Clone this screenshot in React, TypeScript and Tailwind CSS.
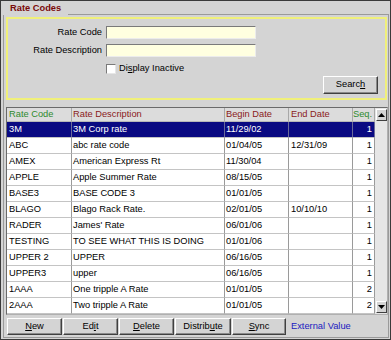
import React from "react";

const rows: string[][] = [
  ["3M", "3M Corp rate", "11/29/02", "", "1"],
  ["ABC", "abc rate code", "01/04/05", "12/31/09", "1"],
  ["AMEX", "American Express Rt", "11/30/04", "", "1"],
  ["APPLE", "Apple Summer Rate", "08/15/05", "", "1"],
  ["BASE3", "BASE CODE 3", "01/01/05", "", "1"],
  ["BLAGO", "Blago Rack Rate.", "02/01/05", "10/10/10", "1"],
  ["RADER", "James' Rate", "06/01/06", "", "1"],
  ["TESTING", "TO SEE WHAT THIS IS DOING", "01/01/06", "", "1"],
  ["UPPER 2", "UPPER", "06/16/05", "", "1"],
  ["UPPER3", "upper", "06/16/05", "", "1"],
  ["1AAA", "One tripple A Rate", "01/01/05", "", "2"],
  ["2AAA", "Two tripple A Rate", "01/01/05", "", "2"],
];

// underlines the mnemonic letter, like a classic windows label
function Mn({ text, at }: { text: string; at: number }) {
  return (
    <span>
      {text.slice(0, at)}
      <span className="underline underline-offset-1">{text[at]}</span>
      {text.slice(at + 1)}
    </span>
  );
}

function RaisedButton({ children, className = "" }: { children: React.ReactNode; className?: string }) {
  return (
    <button
      className={
        "flex items-center justify-center bg-[#d4d4d4] border border-t-white border-l-white border-r-[#404040] border-b-[#404040] shadow-[inset_-1px_-1px_0_#8a8a8a] text-black " +
        className
      }
    >
      {children}
    </button>
  );
}

function ArrowButton({ up }: { up: boolean }) {
  return (
    <div className="w-[11px] h-[12px] mx-auto flex items-center justify-center bg-[#d4d4d4] border border-t-white border-l-white border-r-[#404040] border-b-[#404040]">
      <svg width="7" height="4" viewBox="0 0 7 4">
        {up ? <polygon points="3.5,0 7,4 0,4" fill="#000" /> : <polygon points="0,0 7,0 3.5,4" fill="#000" />}
      </svg>
    </div>
  );
}

const cols = ["w-[65px] pl-[2px]", "w-[153px] pl-[1px]", "w-[64px] pl-[1px]", "w-[64px] pl-[2px]", "w-[22px] pr-[2px] text-right"];

export default function App() {
  return (
    <div className="w-[391px] h-[340px] bg-[#d4d4d4] border border-[#3a3a3a] flex flex-col font-['Liberation_Sans',Arial,sans-serif] text-[9.3px] leading-none text-black overflow-hidden">
      {/* tab header */}
      <div className="flex h-[14px] shrink-0">
        <div className="w-[67px] pl-[9px] pt-[3px] font-bold text-[#7a0a0a]">Rate Codes</div>
        <div className="flex-1 mr-[1px] border-b border-[#9a9a9a]" />
      </div>

      {/* panel */}
      <div className="flex-1 ml-[2px] mr-[1px] mb-[1px] border-l border-r border-b border-[#9a9a9a] flex flex-col">
        {/* search box */}
        <div className="mt-[2px] ml-[2px] mr-[1px] border-2 border-[#f0f07a] flex flex-col pt-[7px] pb-[4px]">
          <div className="flex items-center gap-[4px] h-[13px]">
            <div className="w-[94px] text-right">Rate Code</div>
            <div className="w-[150px] h-[13px] bg-[#ffffe0] border border-t-[#7a7a7a] border-l-[#7a7a7a] border-b-[#ececec] border-r-[#ececec]" />
          </div>
          <div className="flex items-center gap-[4px] h-[13px] mt-[5px]">
            <div className="w-[94px] text-right">Rate Description</div>
            <div className="w-[150px] h-[13px] bg-[#ffffe0] border border-t-[#7a7a7a] border-l-[#7a7a7a] border-b-[#ececec] border-r-[#ececec]" />
          </div>
          <div className="flex items-center h-[10px] mt-[7px] ml-[98px] gap-[3px]">
            <div className="w-[10px] h-[10px] bg-white border border-t-[#7a7a7a] border-l-[#7a7a7a] border-b-[#e6e6e6] border-r-[#e6e6e6]" />
            <Mn text="Display Inactive" at={2} />
          </div>
          <div className="flex justify-end pr-[7px] mt-[2px]">
            <RaisedButton className="w-[55px] h-[18px]">
              <Mn text="Search" at={5} />
            </RaisedButton>
          </div>
        </div>

        {/* table */}
        <div className="mt-[7px] ml-[2px] flex border-t border-l border-b border-r border-t-[#6a6a6a] border-l-[#6a6a6a] border-b-[#b0b0b0] border-r-[#b0b0b0] w-[382px]">
          <div className="flex flex-col">
            <div className="flex h-[14px] bg-[#dcdcdc]">
              {["Rate Code", "Rate Description", "Begin Date", "End Date", "Seq."].map((h, i) => (
                <div
                  key={h}
                  className={
                    "h-[14px] flex items-center border-r border-b border-r-[#a8a8a8] border-b-[#b8b8b8] " +
                    cols[i] +
                    (i === 0 || i === 4 ? " text-[#2e8a2e]" : " text-[#8a1a1a]")
                  }
                >
                  <span className="w-full">{h}</span>
                </div>
              ))}
            </div>
            {rows.map((r, ri) => (
              <div key={r[0]} className={"flex h-[16px] " + (ri === 0 ? "bg-[#0a0a82] text-white" : "bg-white")}>
                {r.map((c, i) => (
                  <div
                    key={i}
                    className={
                      "h-[16px] flex items-center border-r border-b border-b-[#c4c4c4] " +
                      (ri === 0 ? "border-r-[#6a6a9a] " : "border-r-[#9a9a9a] ") +
                      cols[i]
                    }
                  >
                    <span className="w-full whitespace-nowrap">{c}</span>
                  </div>
                ))}
              </div>
            ))}
          </div>
          {/* scrollbar */}
          <div className="w-[12px] flex flex-col justify-between bg-[#e6e6e6] py-[1px]">
            <ArrowButton up />
            <ArrowButton up={false} />
          </div>
        </div>

        {/* buttons */}
        <div className="flex items-center mt-[3px] ml-[3px] gap-[1px]">
          <RaisedButton className="w-[55px] h-[17px]">
            <Mn text="New" at={0} />
          </RaisedButton>
          <RaisedButton className="w-[55px] h-[17px]">
            <Mn text="Edit" at={2} />
          </RaisedButton>
          <RaisedButton className="w-[55px] h-[17px]">
            <Mn text="Delete" at={0} />
          </RaisedButton>
          <RaisedButton className="w-[56px] h-[17px]">
            <Mn text="Distribute" at={7} />
          </RaisedButton>
          <RaisedButton className="w-[54px] h-[17px]">
            <Mn text="Sync" at={0} />
          </RaisedButton>
          <span className="ml-[4px] text-[#1a1ac0]">External Value</span>
        </div>
      </div>
    </div>
  );
}
